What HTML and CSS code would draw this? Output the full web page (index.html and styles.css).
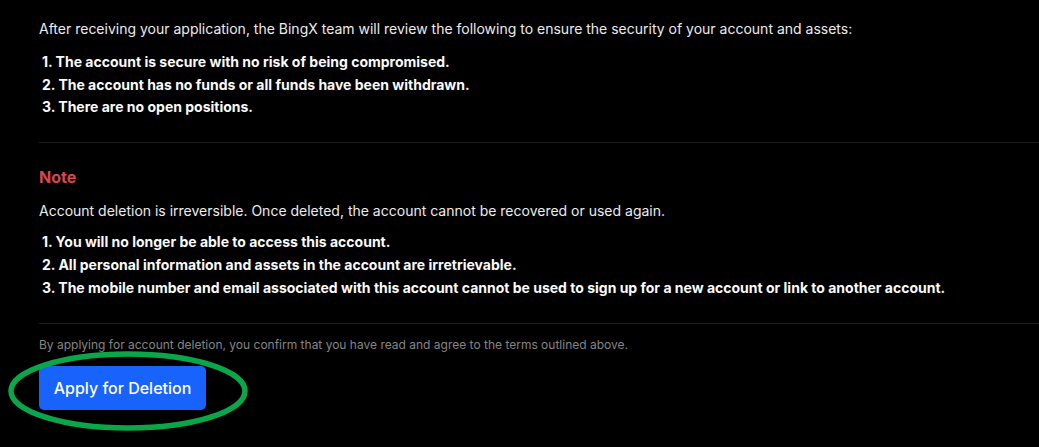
FILE: index.html
```html
<!DOCTYPE html>
<html lang="en">
<head>
<meta charset="utf-8">
<title>Account deletion</title>
<link rel="stylesheet" href="styles.css">
</head>
<body>
<main class="page">
  <section class="block">
    <p class="intro">After receiving your application, the BingX team will review the following to ensure the security of your account and assets:</p>
    <ol class="rules">
      <li>1. The account is secure with no risk of being compromised.</li>
      <li>2. The account has no funds or all funds have been withdrawn.</li>
      <li>3. There are no open positions.</li>
    </ol>
  </section>
  <hr class="divider">
  <section class="block">
    <h3 class="note-title">Note</h3>
    <p class="intro note-text">Account deletion is irreversible. Once deleted, the account cannot be recovered or used again.</p>
    <ol class="rules rules-note">
      <li>1. You will no longer be able to access this account.</li>
      <li>2. All personal information and assets in the account are irretrievable.</li>
      <li>3. The mobile number and email associated with this account cannot be used to sign up for a new account or link to another account.</li>
    </ol>
  </section>
  <hr class="divider divider-bottom">
  <p class="confirm">By applying for account deletion, you confirm that you have read and agree to the terms outlined above.</p>
  <div class="action">
    <button class="apply-btn" type="button">Apply for Deletion</button>
    <svg class="highlight" width="244" height="84" viewBox="0 0 244 84" aria-hidden="true">
      <ellipse cx="122" cy="42" rx="117" ry="37" fill="none" stroke="#0aa74a" stroke-width="5.5"/>
    </svg>
  </div>
</main>
</body>
</html>
```
FILE: styles.css
```css
* { box-sizing: border-box; }
html, body {
  margin: 0;
  padding: 0;
  background: #000;
}
body {
  font-family: Inter, "Noto Sans", "Liberation Sans", sans-serif;
  color: #f2f2f2;
  width: 1039px;
  height: 447px;
  overflow: hidden;
}
.page {
  padding: 18px 0 0 39px;
}
.block { margin: 0; }
.intro {
  margin: 0;
  font-size: 14px;
  line-height: 22px;
  color: #ececec;
}
.rules {
  list-style: none;
  margin: 11px 0 0 0;
  padding: 0 0 0 3px;
  font-size: 14px;
  font-weight: 700;
  line-height: 22.5px;
  color: #fafafa;
}
.rules-note {
  margin-top: 8px;
  line-height: 23px;
}
.divider {
  border: 0;
  border-top: 1px solid #1e1e1e;
  margin: 23px 0 0 0;
  height: 0;
}
.divider-bottom { margin-top: 24px; }
.note-title {
  margin: 22px 0 0 0;
  font-size: 16px;
  line-height: 24px;
  font-weight: 700;
  color: #d8474f;
}
.note-text { margin-top: 11px; }
.confirm {
  margin: 12px 0 0 0;
  font-size: 12px;
  line-height: 18px;
  color: #858585;
}
.action {
  position: relative;
  margin-top: 12px;
  width: 167px;
}
.apply-btn {
  display: block;
  width: 167px;
  height: 44px;
  border: 0;
  border-radius: 5px;
  background: #1763fb;
  color: #fff;
  font-family: Inter, "Noto Sans", "Liberation Sans", sans-serif;
  font-size: 16px;
  font-weight: 500;
  padding: 0;
  cursor: pointer;
}
.highlight {
  position: absolute;
  left: -33px;
  top: -17px;
  pointer-events: none;
}
```
